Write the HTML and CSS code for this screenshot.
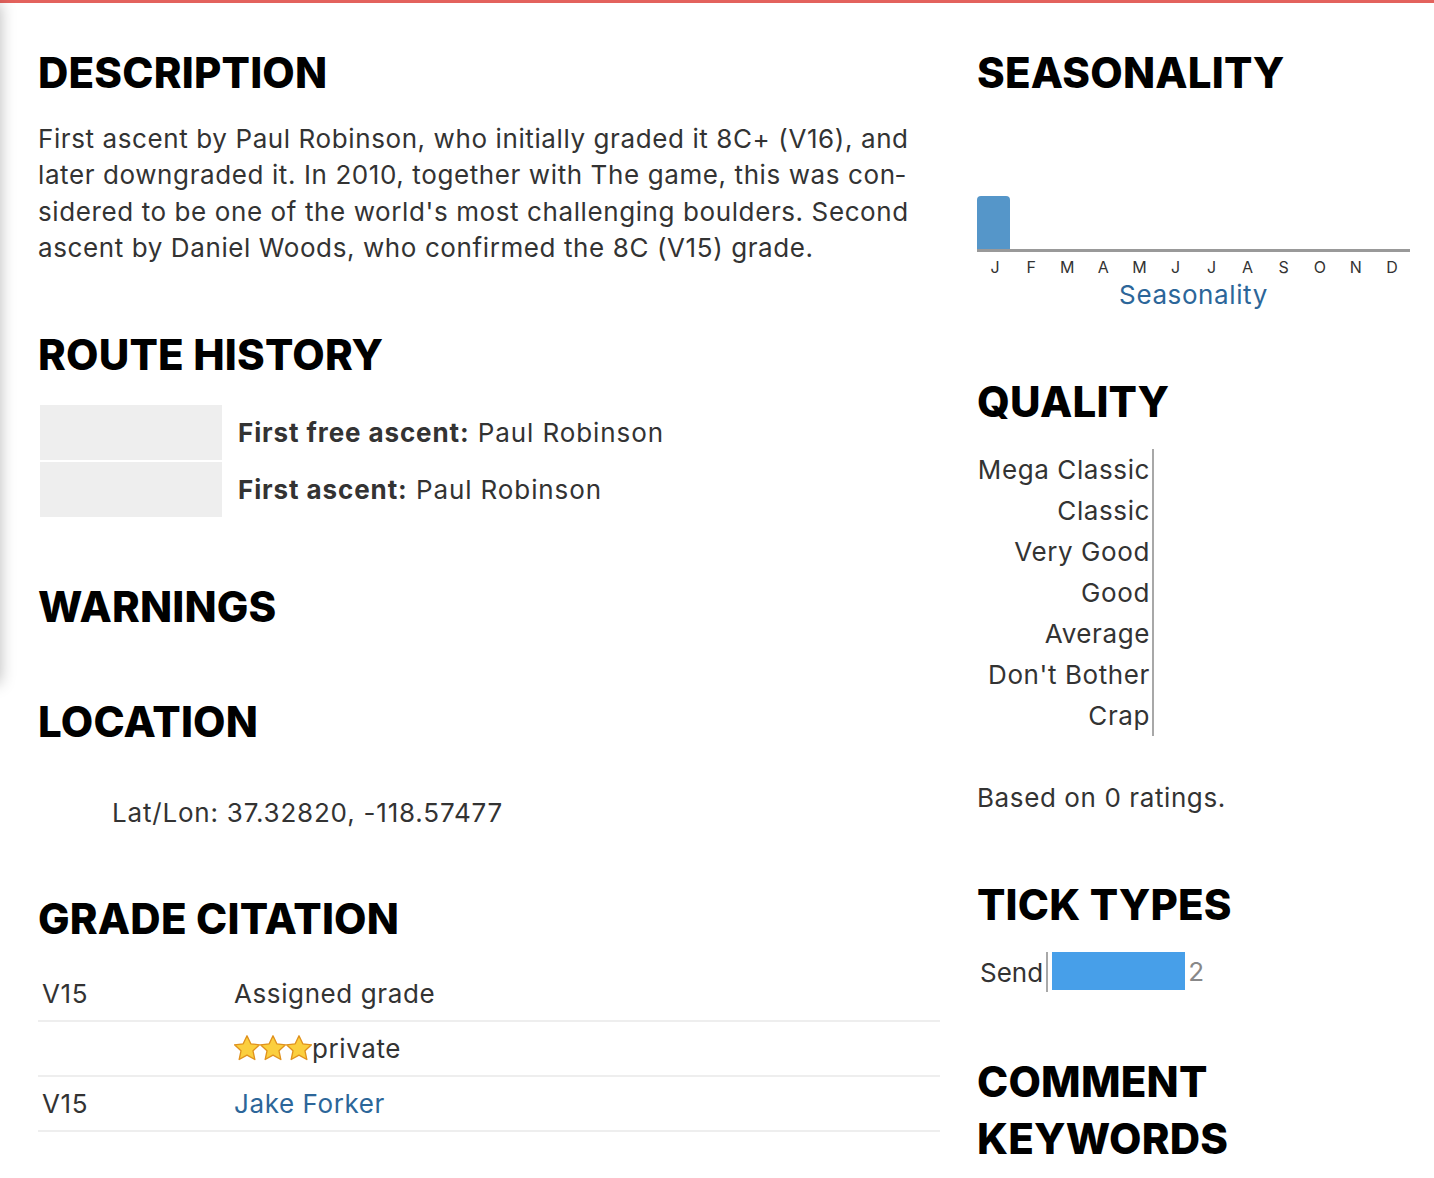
FILE: index.html
```html
<!DOCTYPE html>
<html lang="en">
<head>
<meta charset="utf-8">
<title>Route details</title>
<link rel="stylesheet" href="styles.css">
</head>
<body>
<div class="topbar"></div>
<div class="side-shadow"></div>
<main class="page">
  <div class="col-main">
    <section class="sec sec-desc">
      <h2>DESCRIPTION</h2>
      <p class="desc">First ascent by Paul Robinson, who initially graded it 8C+ (V16), and later downgraded it. In 2010, together with The game, this was con&shy;sidered to be one of the world's most challenging boulders. Second ascent by Daniel Woods, who confirmed the 8C (V15) grade.</p>
    </section>
    <section class="sec sec-history">
      <h2>ROUTE HISTORY</h2>
      <table class="history">
        <tr><td class="hist-img"></td><td class="hist-text"><b>First free ascent:</b> Paul Robinson</td></tr>
        <tr><td class="hist-img"></td><td class="hist-text"><b>First ascent:</b> Paul Robinson</td></tr>
      </table>
    </section>
    <section class="sec sec-warn">
      <h2>WARNINGS</h2>
    </section>
    <section class="sec sec-loc">
      <h2>LOCATION</h2>
      <p class="latlon">Lat/Lon: 37.32820, -118.57477</p>
    </section>
    <section class="sec sec-cite">
      <h2>GRADE CITATION</h2>
      <table class="citation">
        <tr><td class="c-grade">V15</td><td>Assigned grade</td></tr>
        <tr><td class="c-grade"></td><td><span class="stars"><svg viewBox="1.4 1.2 21.2 21.2" class="star"><path d="M12 1.8l3.1 6.6 7.1.8-5.3 4.9 1.5 7.1L12 17.6l-6.4 3.6 1.5-7.1-5.3-4.9 7.1-.8z"/></svg><svg viewBox="1.4 1.2 21.2 21.2" class="star"><path d="M12 1.8l3.1 6.6 7.1.8-5.3 4.9 1.5 7.1L12 17.6l-6.4 3.6 1.5-7.1-5.3-4.9 7.1-.8z"/></svg><svg viewBox="1.4 1.2 21.2 21.2" class="star"><path d="M12 1.8l3.1 6.6 7.1.8-5.3 4.9 1.5 7.1L12 17.6l-6.4 3.6 1.5-7.1-5.3-4.9 7.1-.8z"/></svg></span>private</td></tr>
        <tr><td class="c-grade">V15</td><td><a class="link" href="#">Jake Forker</a></td></tr>
      </table>
    </section>
  </div>

  <aside class="col-side">
    <section class="sec sec-season">
      <h2>SEASONALITY</h2>
      <div class="season-bars">
        <div class="sbar" style="height:53px"></div>
      </div>
      <div class="season-months">
        <span>J</span><span>F</span><span>M</span><span>A</span><span>M</span><span>J</span><span>J</span><span>A</span><span>S</span><span>O</span><span>N</span><span>D</span>
      </div>
      <div class="season-title"><a class="link" href="#">Seasonality</a></div>
    </section>
    <section class="sec sec-quality">
      <h2>QUALITY</h2>
      <div class="quality">
        <div class="q-labels">
          <div>Mega Classic</div>
          <div>Classic</div>
          <div>Very Good</div>
          <div>Good</div>
          <div>Average</div>
          <div>Don't Bother</div>
          <div>Crap</div>
        </div>
      </div>
      <p class="based">Based on 0 ratings.</p>
    </section>
    <section class="sec sec-ticks">
      <h2>TICK TYPES</h2>
      <div class="tick-row">
        <div class="tick-label">Send</div>
        <div class="tick-bar-cell"><div class="tick-bar" style="width:133px"></div><span class="tick-count">2</span></div>
      </div>
    </section>
    <section class="sec sec-keywords">
      <h2>COMMENT<br>KEYWORDS</h2>
    </section>
  </aside>
</main>
</body>
</html>
```

FILE: styles.css
```css
html, body {
  margin: 0;
  padding: 0;
  background: #fff;
}
body {
  font-family: Inter, "Noto Sans", "Liberation Sans", sans-serif;
  font-size: 26px;
  line-height: 36px;
  letter-spacing: 0.6px;
  color: #333;
  overflow: hidden;
  position: relative;
  min-height: 1178px;
}
.topbar {
  height: 3px;
  background: #e3625d;
}
.side-shadow {
  position: absolute;
  left: -40px;
  top: 3px;
  width: 40px;
  height: 680px;
  box-shadow: 0 0 16px rgba(0, 0, 0, 0.28);
}
.page {
  display: grid;
  grid-template-columns: 902px 433px;
  column-gap: 37px;
  padding: 41px 0 0 38px;
}
h2 {
  margin: 0 0 20px;
  font-size: 42px;
  line-height: 57px;
  font-weight: 800;
  color: #000;
  letter-spacing: 0.2px;
}
p { margin: 0; }
.link {
  color: #2c6699;
  text-decoration: none;
}

/* Description */
.desc {
  hyphens: manual;
  line-height: 36.3px;
}
.sec-history { margin-top: 60px; }

/* Route history */
.history {
  border-spacing: 2px;
  margin: 0;
}
.hist-img {
  width: 182px;
  height: 55px;
  padding: 0;
  background: #eee;
}
.hist-text {
  padding: 0 0 0 14px;
  vertical-align: middle;
  letter-spacing: 0.9px;
}
.hist-text b { font-weight: 700; }

.sec-warn { margin-top: 59px; }
.sec-loc { margin-top: 58px; }
.latlon {
  margin-top: 45px;
  padding-left: 74px;
  letter-spacing: 0.8px;
}
.sec-cite { margin-top: 59px; }

/* Citation table */
.citation {
  width: 902px;
  border-collapse: collapse;
  margin-top: 5px;
}
.citation td {
  padding: 9px 0 8px 0;
  border-bottom: 2px solid #eee;
  vertical-align: middle;
}
.citation td.c-grade {
  width: 192px;
  padding-left: 4px;
}
.stars {
  display: inline-flex;
  vertical-align: -3px;
}
.star {
  width: 26px;
  height: 26px;
  fill: #fbcf3e;
  stroke: #e0921e;
  stroke-width: 1.1;
  stroke-linejoin: round;
}

/* Seasonality */
.season-bars {
  display: grid;
  grid-template-columns: repeat(12, 1fr);
  align-items: end;
  width: 433px;
  height: 150px;
  margin-top: -22px;
  border-bottom: 3px solid #999;
}
.sbar {
  width: 33px;
  background: #5596c9;
  border-radius: 4px 4px 0 0;
}
.season-months {
  display: grid;
  grid-template-columns: repeat(12, 1fr);
  width: 433px;
  margin-top: 5px;
  font-size: 16px;
  line-height: 20px;
  letter-spacing: 0;
  text-align: center;
  color: #333;
}
.season-title {
  width: 433px;
  margin-top: 3px;
  text-align: center;
  line-height: 30px;
}

.sec-quality { margin-top: 63px; }
.quality {
  display: flex;
  margin-top: -1px;
}
.q-labels {
  width: 173px;
  padding-right: 2px;
  text-align: right;
  line-height: 41px;
  border-right: 2px solid #a8a8a8;
}
.based {
  margin-top: 44px;
}

.sec-ticks { margin-top: 60px; }
.tick-row {
  display: flex;
  align-items: stretch;
  height: 40px;
  margin-top: -1px;
}
.tick-label {
  padding: 2px 3px 0 3px;
  line-height: 38px;
  letter-spacing: 0;
  border-right: 2px solid #a8a8a8;
}
.tick-bar-cell {
  display: flex;
  align-items: flex-start;
  padding-left: 4px;
}
.tick-bar {
  height: 38px;
  background: #479fe9;
}
.tick-count {
  color: #888;
  padding-left: 3px;
  line-height: 40px;
}

.sec-keywords { margin-top: 61px; }
```
